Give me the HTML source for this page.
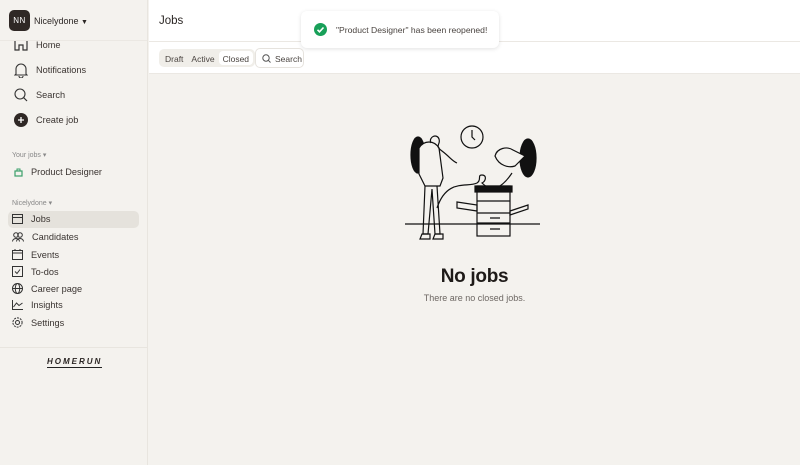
<!DOCTYPE html>
<html><head><meta charset="utf-8"><style>
*{box-sizing:border-box;margin:0;padding:0}
body{width:800px;height:465px;overflow:hidden;font-family:"Liberation Sans",sans-serif;background:#f4f2ee;color:#2b2624;position:relative}
.side{position:absolute;left:0;top:0;width:148px;height:465px;background:#f4f2ee;border-right:1px solid #e8e5df;overflow:hidden}
.main{position:absolute;left:149px;top:0;right:0;bottom:0;background:#f4f2ee}
.hdr{height:42px;background:#fff;border-bottom:1px solid #ebe8e3;padding:15px 10px;font-size:11.5px}
.bar{height:32px;background:#fff;border-bottom:1px solid #ebe8e3;position:relative}
.seg{position:absolute;left:10px;top:7px;height:18px;background:#f0eee9;border-radius:5px;display:flex;padding:2px;font-size:8.5px;color:#4a4440}
.seg span{padding:3px 4px;border-radius:4px}
.seg .on{background:#fff}
.srch{position:absolute;left:106px;top:6px;width:49px;height:20px;border:1px solid #e6e3de;border-radius:5px;font-size:8.5px;padding:5px 0 0 19px;color:#4a4440}
.toast{position:absolute;left:301px;top:11px;width:198px;height:37px;background:#fff;border-radius:6px;box-shadow:0 1px 4px rgba(0,0,0,.12);font-size:8.6px;color:#4a4440;padding:14px 0 0 35px}
.it{position:absolute;left:12px;font-size:9.2px;display:flex;align-items:center;color:#3a3431}
.it svg{margin-right:8px}
.sm{position:absolute;left:12px;font-size:7px;color:#888}
</style></head><body>
<div class="side">
 <div class="it" style="top:39px;left:14px"><svg width="14" height="12" viewBox="0 0 14 12"><path d="M1 2V11H5V6H9V11H13V2" fill="none" stroke="#333" stroke-width="1.2"/></svg>Home</div>
 <div style="position:absolute;left:0;top:0;width:148px;height:41px;background:#f4f2ee;border-bottom:1px solid #ebe8e3"></div>
 <div style="position:absolute;left:9px;top:10px;width:21px;height:21px;background:#2f2825;border-radius:5px;color:#fff;font-size:8px;text-align:center;line-height:21px;letter-spacing:.5px">NN</div>
 <div style="position:absolute;left:34px;top:16px;font-size:9px">Nicelydone <span style="font-size:7px">▼</span></div>
 <div class="it" style="top:62px;left:14px"><svg width="14" height="16" viewBox="0 0 14 16"><path d="M2 12V7a5 5 0 0110 0v5l1 1H1z M5 14a2 2 0 004 0" fill="none" stroke="#333" stroke-width="1.1"/></svg>Notifications</div>
 <div class="it" style="top:88px;left:14px"><svg width="14" height="14" viewBox="0 0 14 14"><circle cx="6" cy="6" r="5" fill="none" stroke="#333" stroke-width="1.1"/><path d="M9.5 9.5L13 13" stroke="#333" stroke-width="1.2"/></svg>Search</div>
 <div class="it" style="top:113px;left:14px"><svg width="14" height="14" viewBox="0 0 14 14"><circle cx="7" cy="7" r="7" fill="#2f2825"/><path d="M7 4v6M4 7h6" stroke="#fff" stroke-width="1.3"/></svg>Create job</div>
 <div class="sm" style="top:151px">Your jobs ▾</div>
 <div class="it" style="top:167px;left:14px"><svg width="9" height="9" viewBox="0 0 9 9"><rect x="1" y="3" width="7" height="5" fill="none" stroke="#3aa06a" stroke-width="1.2"/><path d="M3 3V1h3v2" fill="none" stroke="#3aa06a"/></svg>Product Designer</div>
 <div class="sm" style="top:199px">Nicelydone ▾</div>
 <div style="position:absolute;left:8px;top:211px;width:131px;height:17px;background:#e5e2dc;border-radius:5px"></div>
 <div class="it" style="top:214px"><svg width="11" height="10" viewBox="0 0 11 10"><rect x=".5" y=".5" width="10" height="9" fill="none" stroke="#333"/><path d="M.5 3.5h10" stroke="#333"/></svg>Jobs</div>
 <div class="it" style="top:232px"><svg width="12" height="10" viewBox="0 0 12 10"><circle cx="4" cy="3" r="2.3" fill="none" stroke="#333"/><circle cx="8" cy="3" r="2.3" fill="none" stroke="#333"/><path d="M0.5 9.5a3.5 3 0 017 0M4.5 9.5a3.5 3 0 017 0" fill="none" stroke="#333"/></svg>Candidates</div>
 <div class="it" style="top:249px"><svg width="11" height="11" viewBox="0 0 11 11"><rect x=".5" y="1.5" width="10" height="9" fill="none" stroke="#333"/><path d="M.5 4h10M3 0v2M8 0v2" stroke="#333"/></svg>Events</div>
 <div class="it" style="top:266px"><svg width="11" height="11" viewBox="0 0 11 11"><rect x=".5" y=".5" width="10" height="10" fill="none" stroke="#333"/><path d="M3 5.5l2 2 3-4" fill="none" stroke="#333"/></svg>To-dos</div>
 <div class="it" style="top:283px"><svg width="11" height="11" viewBox="0 0 11 11"><circle cx="5.5" cy="5.5" r="5" fill="none" stroke="#333"/><ellipse cx="5.5" cy="5.5" rx="2.2" ry="5" fill="none" stroke="#333"/><path d="M.5 5.5h10" stroke="#333"/></svg>Career page</div>
 <div class="it" style="top:300px"><svg width="11" height="10" viewBox="0 0 11 10"><path d="M.5 0v9.5H11M1.5 7l3-4 2.5 2.5L10.5 3" fill="none" stroke="#333"/></svg>Insights</div>
 <div class="it" style="top:317px"><svg width="11" height="11" viewBox="0 0 11 11"><circle cx="5.5" cy="5.5" r="4.6" fill="none" stroke="#333" stroke-dasharray="2 1"/><circle cx="5.5" cy="5.5" r="2" fill="none" stroke="#333"/></svg>Settings</div>
 <div style="position:absolute;left:0;top:347px;width:148px;border-top:1px solid #e8e5df"></div>
 <div style="position:absolute;left:47px;top:357px;font-size:8px;font-style:italic;font-weight:bold;letter-spacing:2px;border-bottom:1px solid #222;padding-bottom:1px">HOMERUN</div>
</div>
<div class="main">
 <div class="hdr">Jobs</div>
 <div class="bar">
  <div class="seg"><span>Draft</span><span>Active</span><span class="on">Closed</span></div>
  <div class="srch"><svg style="position:absolute;left:6px;top:5px" width="9" height="9" viewBox="0 0 9 9"><circle cx="4" cy="4" r="3.2" fill="none" stroke="#555"/><path d="M6.3 6.3L8.5 8.5" stroke="#555"/></svg>Search</div>
 </div>
 <svg style="position:absolute;left:256px;top:123px" width="140" height="125" viewBox="0 0 140 125" fill="none" stroke="#111" stroke-width="1.2">
  <ellipse cx="13" cy="32" rx="7" ry="18" fill="#111"/>
  <path d="M14 25c5-8 15-8 20 0l4 30-3 8H20l-6-12z" fill="#f4f2ee"/>
  <path d="M20 63l-2 48h5l4-45 3 45h5l-3-48"/>
  <path d="M17 111h8v5h-10zM30 111h8v5h-10z"/>
  <path d="M26 20c-3-6 6-10 8-4s-5 6 3 12 10 10 15 12"/>
  <circle cx="67" cy="14" r="11"/><path d="M67 7v7l3 3"/>
  <ellipse cx="123" cy="35" rx="8" ry="19" fill="#111"/>
  <path d="M90 33c2-8 12-10 18-6l12 6-10 10c-6 2-16 0-20-10z" fill="#f4f2ee"/>
  <path d="M32 85c10-30 30-20 40-25 5-3 0-8 5-8s4 6 0 8c10 10 20 5 30-10"/>
  <rect x="72" y="63" width="33" height="50" fill="#f4f2ee"/>
  <rect x="70" y="63" width="37" height="6" fill="#111"/>
  <path d="M72 78h33M72 90h33M72 100h33M85 95h10M85 106h10"/>
  <path d="M52 79l20 3v6l-20-3zM105 88l18-6v4l-18 6z"/>
  <path d="M0 101h135"/>
 </svg>
 <div style="position:absolute;left:0;right:0;top:266px;text-align:center;font-size:19px;font-weight:900;color:#1e1a18;letter-spacing:-.3px">No jobs</div>
 <div style="position:absolute;left:0;right:0;top:293px;text-align:center;font-size:9px;color:#6d6763">There are no closed jobs.</div>
</div>
<div class="toast"><svg style="position:absolute;left:13px;top:12px" width="13" height="13" viewBox="0 0 13 13"><circle cx="6.5" cy="6.5" r="6.5" fill="#18a059"/><path d="M3.5 6.8l2 2 4-4.3" fill="none" stroke="#fff" stroke-width="1.6"/></svg>"Product Designer" has been reopened!</div>
</body></html>
